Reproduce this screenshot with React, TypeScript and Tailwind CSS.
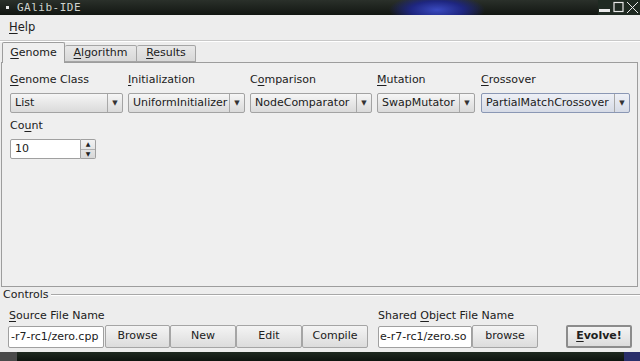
import React from "react";

function Mn({ t, i = 0 }: { t: string; i?: number }) {
	return (
		<span>
			{t.slice(0, i)}
			<u className="underline-offset-2">{t[i]}</u>
			{t.slice(i + 1)}
		</span>
	);
}

function Combo({ label, mi = 0, value, w, focused }: { label: string; mi?: number; value: string; w: string; focused?: boolean }) {
	return (
		<div className={`flex flex-col ${w}`}>
			<div className="h-[16px] leading-[16px] mb-[5px]">
				<Mn t={label} i={mi} />
			</div>
			<div
				className={`h-[20px] flex items-stretch rounded-[2px] border ${
					focused
						? "border-[#8a97b4] bg-gradient-to-b from-[#eef0f6] to-[#d6dbe6]"
						: "border-[#a3a3a3] bg-gradient-to-b from-[#f6f6f6] to-[#dadada]"
				}`}
			>
				<div className="flex-1 pl-[4px] leading-[18px] whitespace-nowrap overflow-hidden">{value}</div>
				<div className="w-[15px] border-l border-[#a8a8a8] flex items-center justify-center text-[7px] text-[#333]">▼</div>
			</div>
		</div>
	);
}

function Btn({ children, w = "w-[66px]", bold }: { children: React.ReactNode; w?: string; bold?: boolean }) {
	return (
		<div
			className={`${w} h-[23px] flex items-center justify-center rounded-[2px] bg-gradient-to-b from-[#f4f4f4] to-[#dcdcdc] ${
				bold ? "border-2 border-[#8c8c8c] font-bold" : "border border-[#a5a5a5]"
			}`}
		>
			{children}
		</div>
	);
}

export default function App() {
	return (
		<div className="w-[640px] h-[361px] overflow-hidden bg-[#ededed] flex flex-col text-[11px] text-[#202020] font-['DejaVu_Sans',sans-serif]">
			{/* title bar */}
			<div className="h-[15px] flex items-center bg-[radial-gradient(ellipse_48px_16px_at_437px_10px,#3a4ac0_0%,#1e2680_55%,transparent_100%),linear-gradient(to_bottom,#2a302a,#121612)] shrink-0">
				<div className="w-[3px] h-[3px] bg-[#e8e8e8] ml-[6px]" />
				<div className="ml-[8px] text-[11px] leading-[15px] text-[#cfd4cf] font-['DejaVu_Sans_Mono',monospace] tracking-[0.5px]">GAlib-IDE</div>
				<div className="ml-auto flex items-center h-[15px]">
					<svg width="42" height="15" viewBox="0 0 42 15">
						<rect x="0" y="0" width="42" height="15" fill="#1f2a22" />
						<rect x="1" y="9" width="11" height="3" fill="#e8e8e8" />
						<rect x="16" y="2.5" width="9" height="9" fill="none" stroke="#e8e8e8" strokeWidth="1.2" />
						<path d="M29 2 L40 13 M40 2 L29 13" stroke="#e8e8e8" strokeWidth="1" />
					</svg>
				</div>
			</div>

			{/* menu */}
			<div className="h-[25px] flex items-center pl-[9px] shrink-0 text-[11.5px]">
				<Mn t="Help" />
			</div>
			<div className="h-[2px] border-t border-[#c9c9c9] border-b border-b-white shrink-0" />

			{/* tabs */}
			<div className="h-[20px] flex items-end pl-[2px] shrink-0 relative z-10">
				<div className="w-[63px] h-[21px] -mb-[1px] border border-b-0 border-[#9d9d9d] rounded-t-[2px] bg-[#efefef] flex items-center justify-center">
					<Mn t="Genome" />
				</div>
				<div className="w-[72px] h-[17px] border border-l-0 border-[#a5a5a5] rounded-t-[2px] bg-gradient-to-b from-[#e8e8e8] to-[#d8d8d8] flex items-center justify-center">
					<Mn t="Algorithm" />
				</div>
				<div className="w-[59px] h-[17px] border border-l-0 border-[#a5a5a5] rounded-t-[2px] bg-gradient-to-b from-[#e8e8e8] to-[#d8d8d8] flex items-center justify-center">
					<Mn t="Results" />
				</div>
			</div>

			{/* genome panel */}
			<div className="ml-[1px] w-[637px] h-[225px] border border-[#9d9d9d] bg-[#efefef] shrink-0 pl-[8px] pt-[9px]">
				<div className="flex">
					<Combo label="Genome Class" value="List" w="w-[113px]" />
					<div className="w-[5px]" />
					<Combo label="Initialization" value="UniformInitializer" w="w-[117px]" />
					<div className="w-[5px]" />
					<Combo label="Comparison" mi={1} value="NodeComparator" w="w-[122px]" />
					<div className="w-[5px]" />
					<Combo label="Mutation" value="SwapMutator" w="w-[98px]" />
					<div className="w-[6px]" />
					<Combo label="Crossover" value="PartialMatchCrossover" w="w-[149px]" focused />
				</div>
				<div className="mt-[5px] h-[16px] leading-[16px]">
					<Mn t="Count" i={2} />
				</div>
				<div className="mt-[5px] flex w-[86px] h-[20px]">
					<div className="flex-1 bg-white border border-[#a0a0a0] rounded-l-[2px] pl-[4px] leading-[18px]">10</div>
					<div className="w-[15px] flex flex-col border border-l-0 border-[#a0a0a0] rounded-r-[2px] bg-gradient-to-b from-[#f2f2f2] to-[#d8d8d8]">
						<div className="flex-1 flex items-center justify-center text-[6px] leading-none border-b border-[#b0b0b0]">▲</div>
						<div className="flex-1 flex items-center justify-center text-[6px] leading-none">▼</div>
					</div>
				</div>
			</div>

			{/* controls */}
			<div className="mt-[1px] h-[14px] flex items-center pl-[3px] shrink-0">
				<span className="leading-[14px]">Controls</span>
				<div className="flex-1 ml-[2px] h-[2px] border-t border-[#a8a8a8] border-b border-b-white" />
			</div>
			<div className="mt-[6px] flex shrink-0">
				<div className="flex flex-col pl-[8px]">
					<div className="h-[16px] leading-[16px] pl-[1px] mb-[1px]">
						<Mn t="Source File Name" />
					</div>
					<div className="flex items-center">
						<div className="w-[96px] h-[22px] bg-white border border-[#a0a0a0] rounded-[2px] pl-[2px] leading-[20px] whitespace-nowrap overflow-hidden">-r7-rc1/zero.cpp</div>
						<div className="w-[1px]" />
						<Btn w="w-[65px]">Browse</Btn>
						<Btn>New</Btn>
						<Btn>Edit</Btn>
						<Btn>Compile</Btn>
					</div>
				</div>
				<div className="flex flex-col ml-[10px]">
					<div className="h-[16px] leading-[16px] mb-[1px]">
						<Mn t="Shared Object File Name" i={7} />
					</div>
					<div className="flex items-center">
						<div className="w-[94px] h-[22px] bg-white border border-[#a0a0a0] rounded-[2px] pl-[1px] leading-[20px] whitespace-nowrap overflow-hidden">e-r7-rc1/zero.so</div>
						<Btn>browse</Btn>
					</div>
				</div>
				<div className="flex flex-col justify-end ml-[28px]">
					<Btn w="w-[66px]" bold>
						<Mn t="Evolve!" />
					</Btn>
				</div>
			</div>
			<div className="flex-1" />
			{/* taskbar strip */}
			<div className="h-[9px] shrink-0 flex">
				<div className="w-[17px] bg-[#4a4a4a]" />
				<div className="flex-1 bg-gradient-to-b from-[#1f2a20] to-[#0e140f]" />
				<div className="w-[16px] bg-[#2a2f6a]" />
			</div>
		</div>
	);
}
